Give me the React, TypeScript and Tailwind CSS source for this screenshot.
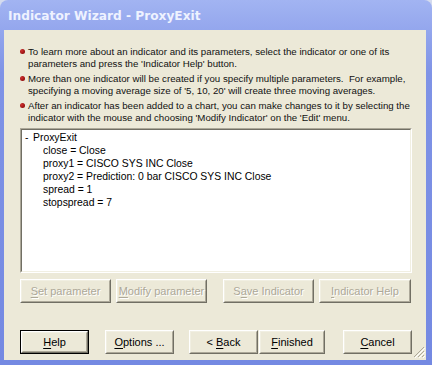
import React from "react";

const font = { fontFamily: '"Liberation Sans", Arial, sans-serif' };

const tips = [
  [
    "To learn more about an indicator and its parameters, select the indicator or one of its",
    "parameters and press the 'Indicator Help' button.",
  ],
  [
    "More than one indicator will be created if you specify multiple parameters.  For example,",
    "specifying a moving average size of '5, 10, 20' will create three moving averages.",
  ],
  [
    "After an indicator has been added to a chart, you can make changes to it by selecting the",
    "indicator with the mouse and choosing 'Modify Indicator' on the 'Edit' menu.",
  ],
];

const params = [
  "close = Close",
  "proxy1 = CISCO SYS INC Close",
  "proxy2 = Prediction: 0 bar CISCO SYS INC Close",
  "spread = 1",
  "stopspread = 7",
];

function Bullet() {
  return (
    <span className="mt-[3px] mr-[3px] h-[5px] w-[5px] shrink-0 rounded-full bg-[radial-gradient(circle_at_35%_35%,#d03030,#7a0000)]" />
  );
}

function Btn({
  pre = "",
  u,
  rest,
  disabled = false,
  isDefault = false,
  className = "",
}: {
  pre?: string;
  u: string;
  rest: string;
  disabled?: boolean;
  isDefault?: boolean;
  className?: string;
}) {
  const inner = (
    <div className="flex h-full w-full border border-t-white border-l-white border-b-[#716f64] border-r-[#716f64]">
      <div className="flex h-full w-full items-center justify-center border border-t-[#f1efe2] border-l-[#f1efe2] border-b-[#aca899] border-r-[#aca899] bg-[#ece9d8]">
        <span
          className={
            disabled
              ? "text-[11px] text-[#aca899] [text-shadow:1px_1px_0_#fff]"
              : "text-[11px] text-black"
          }
        >
          {pre}
          <span className="underline underline-offset-2">{u}</span>
          {rest}
        </span>
      </div>
    </div>
  );
  return (
    <div className={`h-[24px] ${isDefault ? "border border-black" : ""} ${className}`}>
      {inner}
    </div>
  );
}

export default function App() {
  return (
    <div className="h-[365px] w-[432px] bg-[#d4dbee]" style={font}>
      <div className="flex h-[365px] w-[432px] flex-col rounded-t-[8px] bg-[linear-gradient(#a2b4f2,#7f93e6_20%,#7489e2)]">
        <div className="flex h-[30px] items-center pl-[8px] pt-[3px]">
          <span className="text-[12.2px] font-bold text-[#eef2ff] [font-family:'DejaVu_Sans',sans-serif]">
            Indicator Wizard - ProxyExit
          </span>
        </div>
        <div className="relative ml-[4px] mr-[6px] flex flex-1 flex-col bg-[#ece9d8] pl-[16px] pr-[14px] pt-[16px]">
          <div className="flex flex-col gap-[3px] text-[9.7px] leading-[12px] text-[#111]">
            {tips.map((t, i) => (
              <div key={i} className="flex">
                <Bullet />
                <div>
                  <div className="whitespace-pre">{t[0]}</div>
                  <div className="whitespace-pre">{t[1]}</div>
                </div>
              </div>
            ))}
          </div>

          <div className="mt-[4px] h-[145px] border border-t-[#aca899] border-l-[#aca899] border-b-white border-r-white">
            <div className="h-full border border-t-[#716f64] border-l-[#716f64] border-b-[#f1efe2] border-r-[#f1efe2] bg-white pl-[3px] pt-[1px] text-[10.4px] leading-[13px] text-black">
              <div className="flex">
                <span className="w-[8px]">-</span>
                <span>ProxyExit</span>
              </div>
              {params.map((p) => (
                <div key={p} className="pl-[18px]">
                  {p}
                </div>
              ))}
            </div>
          </div>

          <div className="mt-[6px] flex">
            <Btn u="S" rest="et parameter" disabled className="w-[91px]" />
            <Btn u="M" rest="odify parameter" disabled className="ml-[5px] w-[91px]" />
            <Btn pre="S" u="a" rest="ve Indicator" disabled className="ml-[16px] w-[91px]" />
            <Btn u="I" rest="ndicator Help" disabled className="ml-[5px] w-[92px]" />
          </div>

          <div className="mt-[27px] flex">
            <Btn u="H" rest="elp" isDefault className="w-[69px]" />
            <Btn u="O" rest="ptions ..." className="ml-[16px] w-[69px]" />
            <Btn pre="< " u="B" rest="ack" className="ml-[15px] w-[69px]" />
            <Btn u="F" rest="inished" className="ml-[1px] w-[66px]" />
            <Btn u="C" rest="ancel" className="ml-[18px] w-[69px]" />
          </div>

          <svg className="absolute bottom-[2px] right-[1px]" width="12" height="12" viewBox="0 0 12 12">
            <path d="M11 1L1 11M11 5L5 11M11 9L9 11" stroke="#aca899" strokeWidth="1" />
            <path d="M12 2L2 12M12 6L6 12M12 10L10 12" stroke="#fff" strokeWidth="1" />
          </svg>
        </div>
        <div className="h-[5px]" />
      </div>
    </div>
  );
}
